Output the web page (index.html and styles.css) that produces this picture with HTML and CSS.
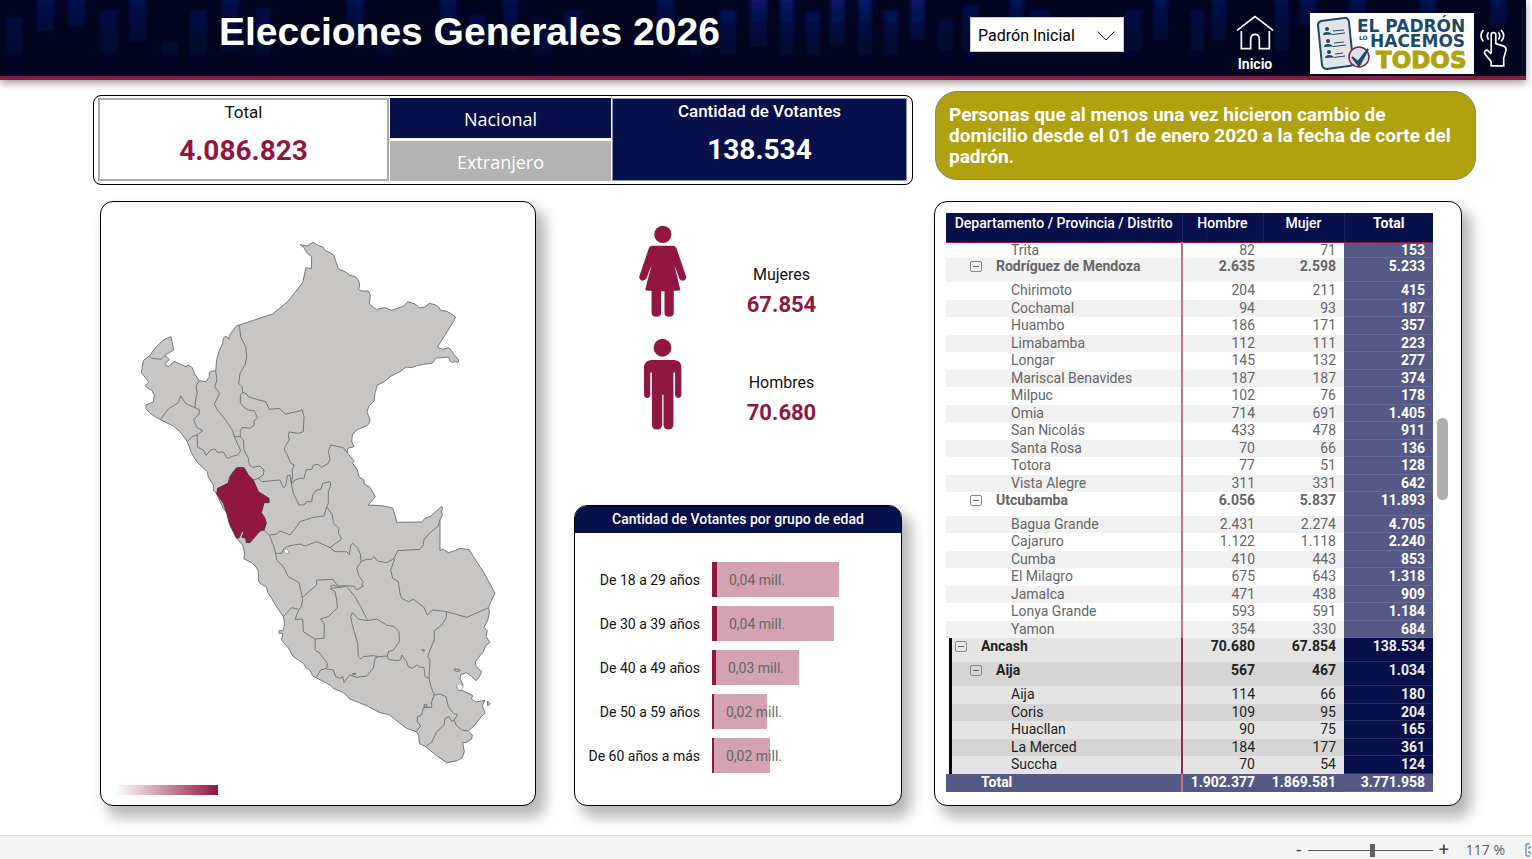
FILE: index.html
```html
<!DOCTYPE html>
<html lang="es">

<head>
    <meta charset="UTF-8">
    <meta name="viewport" content="width=device-width, initial-scale=1.0">
    <title>Elecciones Generales 2026</title>
    <link rel="stylesheet" href="styles.css">
</head>

<body>
    <header class="topbar">
        <svg class="topbar-bg" viewBox="0 0 1526 76" preserveAspectRatio="none" aria-hidden="true">
            <defs>
                <linearGradient id="streak" x1="0" y1="0" x2="0" y2="1">
                    <stop offset="0" stop-color="#0a1d7c" />
                    <stop offset="1" stop-color="#04103f" stop-opacity="0.3" />
                </linearGradient>
                <filter id="soft"><feGaussianBlur stdDeviation="2" /></filter>
            </defs>
            <g fill="url(#streak)" filter="url(#soft)">
                <g opacity="0.6">
                    <path d="M6 18h17v56H6zM37 -5h17v36H37zM68 -5h17v32H68zM100 10h17v60h-17zM129 -5h17v46h-17zM161 43h17v32h-17zM190 10h17v50h-17zM222 -5h17v56h-17zM256 8h15v60h-15z" />
                    <path d="M347 -5h17v45h-17zM376 30h18v42h-18zM440 -5h17v45h-17zM469 15h16v32h-16zM503 -5h15v56h-15zM535 20h17v54h-17zM564 10h17v30h-17zM657 -5h17v45h-17zM689 25h14v46h-14z" />
                    <path d="M938 20h15v52h-15zM963 5h15v60h-15zM1009 -5h15v40h-15zM1030 10h20v30h-20zM1125 10h16v52h-16zM1153 -5h15v45h-15zM1190 10h14v52h-14zM1212 -5h14v45h-14zM1275 -5h14v75h-14zM1300 -5h16v30h-16zM1350 -5h16v20h-16zM1420 -5h16v20h-16zM1490 -5h16v30h-16z" />
                </g>
                <g opacity="0.9">
                    <path d="M720 10h16v46h-16zM750 -5h17v52h-17zM780 -5h14v66h-14zM806 12h14v44h-14zM830 -5h15v50h-15zM858 -5h14v66h-14zM884 10h14v50h-14zM910 -5h15v45h-15z" />
                </g>
            </g>
        </svg>
        <h1>Elecciones Generales 2026</h1>
        <div class="padron-select">
            <select aria-label="Padrón">
                <option>Padrón Inicial</option>
                <option>Padrón Final</option>
            </select>
            <svg width="18" height="10" viewBox="0 0 18 10" aria-hidden="true"><path d="M0.5 0.5l8.5 8.5 8.5-8.5" fill="none" stroke="#222" /></svg>
        </div>
        <a href="#" class="home-link">
            <svg width="38" height="35" viewBox="48 44 114 105" aria-hidden="true">
                <path d="M51 90L105 49L159 90M64 92V145H92V117Q92 102 105 102Q118 102 118 117V145H148V92" fill="none" stroke="#fff" stroke-width="5" />
            </svg>
            <span>Inicio</span>
        </a>
        <svg class="brand" width="164" height="61" viewBox="0 0 164 61" role="img" aria-label="El padrón lo hacemos todos">
            <rect width="164" height="61" fill="#fff" />
            <path d="M11 8L34 5Q38 4 39 9L43 49Q43 53 39 53L17 56Q13 56 12 52L8 12Q8 9 11 8Z" fill="#e3e4e6" stroke="#1b4a6d" stroke-width="2" />
            <g fill="#1b4a6d">
                <circle cx="17" cy="16" r="2" /><path d="M13 22q0-3 4-3t5 2.500z" />
                <circle cx="18" cy="28" r="2" /><path d="M14 34q0-3 4-3t5 2.500z" />
                <circle cx="19" cy="39" r="2" /><path d="M15 45q0-3 4-3t5 2.500z" />
            </g>
            <path d="M23 18l11-1M22 21.500l13-1.500M24 30l10-1M23 33.500l13-1.500M25 41l8-1M24 44.500l11-1.500" stroke="#1b4a6d" fill="none" />
            <circle cx="49" cy="44" r="10" fill="#dfe1e6" stroke="#8b2048" stroke-width="1.500" />
            <path d="M42 44l6 5 10-13-9 17z" fill="#1b4a6d" stroke="#1b4a6d" stroke-width="2" />
            <text x="47" y="19" class="brand-blue brand-line">EL PADRÓN</text>
            <text x="49" y="27" class="brand-blue brand-small">LO</text>
            <text x="60" y="34" class="brand-blue brand-line">HACEMOS</text>
            <text x="66" y="55" class="brand-gold">TODOS</text>
        </svg>
        <svg class="touch" width="27" height="41" viewBox="778 82 82 122" aria-hidden="true">
            <path d="M812 162V104Q812 98 819 98Q826 98 826 104V131L848 138Q858 141 857 151L850 176V199H812V186L792 161Q790 151 800 151L812 162M804 97Q796 107 804 119M788 90Q774 107 788 125M834 97Q842 107 834 119M842 90Q858 107 842 125" fill="none" stroke="#fff" stroke-width="5" />
        </svg>
    </header>

    <main>
        <div class="top-row">
            <section class="summary">
                <div class="summary-total">
                    <span class="summary-label">Total</span>
                    <strong>4.086.823</strong>
                </div>
                <div class="scope">
                    <button type="button" class="active">Nacional</button>
                    <button type="button">Extranjero</button>
                </div>
                <div class="summary-votes">
                    <span class="summary-label">Cantidad de Votantes</span>
                    <strong>138.534</strong>
                </div>
            </section>
            <p class="note">Personas que al menos una vez hicieron cambio de domicilio desde el 01 de enero 2020 a la fecha de corte del padrón.</p>
        </div>

        <div class="panels">
            <section class="card map-card">
                <svg class="map" viewBox="3 -54 1302 1740" role="img" aria-label="Mapa del Perú">
                    <!-- country outline -->
                    <path class="region" d="M600 74L622 78L630 72L639 67L655 77L670 82L673 90L690 98L702 107L708 125L715 147L735 155L750 166L767 170L777 185L779 200L775 208L785 213L805 213L811 225L808 252L820 262L830 268L855 263L875 271L895 264L912 258L923 245L945 252L958 263L975 261L988 250L1005 254L1017 262L1022 271L1040 274L1055 282L1067 292L1060 305L1012 382L1030 388L1046 383L1056 394L1062 404L1076 419L1074 428L1066 424L1058 428L1050 423L1046 411L1025 413L1008 414L998 429L970 433L950 437L935 443L918 441L900 455L875 467L850 487L832 495L825 520L822 543L807 558L801 575L810 600L808 610L800 617L770 630L757 645L755 665L762 680L743 685L743 700L762 722L758 730L772 750L777 770L792 780L793 792L810 802L826 830L804 855L845 857L878 864L885 885L890 907L965 906L975 895L990 890L1025 859L1028 865L1024 875L1028 884L1020 898L1020 992L1028 987L1045 998L1065 992L1080 985L1108 989L1120 1010L1150 1055L1180 1110L1185 1120L1175 1140L1166 1160L1168 1180L1163 1200L1152 1222L1162 1232L1158 1250L1170 1267L1157 1277L1150 1295L1135 1313L1126 1325L1128 1340L1145 1355L1138 1370L1129 1382L1115 1370L1100 1358L1082 1364L1080 1377L1090 1395L1070 1400L1074 1411L1088 1412L1110 1422L1118 1427L1114 1437L1128 1446L1155 1441L1147 1457L1155 1480L1145 1488L1125 1515L1105 1533L1117 1545L1115 1557L1100 1567L1088 1568L1093 1595L1087 1613L1072 1622L1040 1628L1010 1607L977 1580L958 1570L956 1545L948 1535L920 1525L900 1510L868 1484L840 1478L800 1457L750 1437L730 1418L702 1406L690 1395L650 1374L638 1368L630 1350L620 1345L610 1330L578 1308L568 1287L557 1275L545 1260L548 1240L537 1240L537 1232L548 1232L553 1220L553 1205L550 1190L528 1158L515 1135L503 1118L500 1102L480 1090L475 1080L475 1055L468 1040L455 1028L432 1017L434 1000L428 975L410 955L390 915L380 880L365 855L350 822L340 810L340 795L325 772L322 755L290 725L275 700L262 665L240 635L220 618L181 599L150 580L138 566L138 555L150 550L160 545L163 525L155 510L148 508L135 497L146 488L138 475L124 458L130 422L148 408L165 385L190 360L213 350L216 365L221 390L205 400L195 403L198 410L208 418L197 430L197 437L207 439L222 424L240 432L258 440L265 435L277 443L283 460L298 482L318 485L328 470L328 458L335 453L347 453L350 420L357 395L368 370L370 355L378 348L386 358L388 346L410 317L418 315L517 282L563 245L608 188L618 143L634 146L635 110L620 98L611 82Z" />
                    <!-- department borders -->
                    <g class="border">
                        <path d="M148 408L155 415L184 418L197 405M298 482L288 497L292 522L288 530L285 563L298 569L297 583L281 598L290 622L308 632L291 645L293 682L310 690L318 706L332 690L345 687L352 697L370 696L382 715L400 708L413 705L422 692" />
                        <path d="M181 599L205 567L235 548L242 527L255 548L262 553L285 563M262 665L276 650L291 645" />
                        <path d="M347 453L351 480L344 500L359 520L343 552L352 570L375 597L385 612L398 632L403 650L422 692" />
                        <path d="M418 315L422 350L437 380L440 410L435 435L420 460L416 490L426 500L428 517L421 525L421 548L432 562L445 570L462 572L473 593L462 603L463 615L450 625L428 622L421 632L421 650L403 650" />
                        <path d="M428 517L440 522L445 530L470 538L497 545L508 568L537 565L557 582L580 577L600 573L606 568L612 590L610 635L595 640L568 636L565 645L568 660L555 680L553 690L560 700L572 730L583 735L576 750L578 765L574 792" />
                        <path d="M421 650L430 660L432 690L445 715L448 735L458 742L480 738L492 750L490 765L475 775L460 780M475 775L485 785L540 780L550 803L557 798L562 767L570 765L574 792" />
                        <path d="M574 792L585 780L600 775L612 775L618 750L635 748L640 735L655 733L665 742L685 730L690 717L685 695L692 675L730 683L743 700" />
                        <path d="M574 792L580 820L597 855L612 855L620 845L635 845L638 825L650 810L663 808L668 790L690 785L692 795L685 815L685 850L680 860L697 885L700 910L717 925L715 940L725 957L690 983" />
                        <path d="M680 860L672 888L640 892L600 905L590 920L570 945L540 933L530 942L508 945L492 930M508 945L520 975L527 1000L530 1020L550 1040L565 1070L597 1088L603 1115L608 1140L604 1160L595 1172L585 1198L608 1197L610 1235L625 1245L645 1257L672 1255L673 1212L662 1197L685 1190L700 1175L712 1165L710 1140L705 1115L690 1105L720 1102" />
                        <path d="M527 1000L545 1000L552 985L570 977L600 972L615 978L650 965L690 983L705 995L740 995L748 1004L752 975L758 970L772 982L782 1005L783 1025L770 1045L778 1070L790 1087L785 1095L790 1098L770 1110L762 1098L740 1098L720 1102L705 1088L700 1078L650 1080L650 1095L630 1112L608 1132" />
                        <path d="M690 1100L700 1095L708 1098L740 1098M783 1025L800 1018L815 1018L822 1010L832 1023L860 1028L880 1017L890 1000L893 992L960 988L970 975L972 958L990 938L1015 918L1020 898" />
                        <path d="M885 1015L872 1050L878 1075L895 1085L900 1120L905 1135L925 1145L940 1138L972 1162L982 1185L997 1170L1040 1175L1100 1192L1166 1163" />
                        <path d="M1040 1175L1038 1195L1025 1215L1003 1232L1003 1260L990 1290L983 1310L990 1320L987 1375L993 1400L1003 1425L1020 1422L1038 1430L1045 1460L1060 1480L1073 1485L1062 1500" />
                        <path d="M1003 1425L995 1445L995 1462L970 1463L965 1485L952 1490L952 1505L962 1518L948 1535M977 1580L995 1567L1010 1535L1032 1515L1035 1495L1048 1490L1055 1505L1062 1500L1068 1515L1085 1530L1105 1533" />
                        <path d="M550 1190L575 1163L595 1168M646 1257L645 1290L660 1300L682 1330L680 1345L662 1350L648 1374M680 1347L700 1350L707 1370L720 1375L728 1370L732 1388L745 1370L750 1365L770 1372L800 1368L820 1345L825 1315L835 1310" />
                        <path d="M757 1178L752 1190L757 1215L763 1235L773 1270L775 1310L782 1317L790 1310L820 1307L835 1310L862 1308L865 1295L880 1290L898 1265L897 1235L882 1220L860 1215L830 1197L800 1202L775 1197L757 1178M803 1202L782 1160L765 1130L740 1100" />
                        <path d="M862 1308L865 1318L890 1322L902 1320L905 1305L920 1325L925 1340L937 1345L950 1335L960 1342L972 1342L975 1370L987 1375" />
                    </g>
                    <!-- lakes and islands -->
                    <path class="lake" d="M552 988L562 988L567 997L560 1001L553 996ZM1070 1398L1078 1390L1090 1399L1084 1410L1074 1411Z" />
                    <path class="region" d="M1062 1347L1078 1348L1080 1353L1068 1354ZM966 1288L974 1291L972 1294L966 1291ZM972 1454H981V1459H972ZM757 1362L766 1359L766 1364ZM1162 1444L1171 1451L1163 1457Z" />
                    <path class="region selected" d="M410 743L432 743L445 765L460 780L475 815L507 835L507 848L492 848L484 878L495 895L499 910L492 930L480 933L465 950L450 968L438 967L438 955L426 952L432 935L425 935L418 953L410 955L388 910L381 880L370 850L350 822L353 805L384 790L390 770L400 755Z" />
                </svg>
                <div class="map-legend"></div>
            </section>

            <div class="middle">
                <section class="gender">
                    <div class="figures">
                        <svg width="49" height="93" viewBox="200 46 148 280" aria-hidden="true">
                            <circle cx="275" cy="74" r="26" />
                            <path d="M243 108H305Q313 108 316 115L345 200Q347 212 335 214Q328 214 325 208L310 166L327 238Q328 244 320 244H308V310Q308 323 294 323Q280 323 280 310V246H270V310Q270 323 255 323Q241 323 241 310V244H228Q221 243 223 236L241 166L225 208Q220 214 212 214Q202 211 204 200L233 115Q236 108 243 108Z" />
                        </svg>
                        <svg width="49" height="93" viewBox="200 384 148 280" aria-hidden="true">
                            <circle cx="274" cy="413" r="27" />
                            <path d="M240 450H310Q331 452 331 473V556Q330 565 321 565Q313 564 312 556V488H307V646Q305 660 292 660Q278 660 277 646V555H273V646Q271 660 257 660Q243 660 242 646V488H237V556Q236 565 228 565Q219 564 218 556V473Q219 452 240 450Z" />
                        </svg>
                    </div>
                    <div class="counts">
                        <div class="count"><span>Mujeres</span><strong>67.854</strong></div>
                        <div class="count"><span>Hombres</span><strong>70.680</strong></div>
                    </div>
                </section>

                <section class="card age-card">
                    <h2>Cantidad de Votantes por grupo de edad</h2>
                    <div class="bars">
                        <div class="bar-row"><span class="bar-label">De 18 a 29 años</span><div class="track"><div class="bar large" style="width: 72%">0,04 mill.</div></div></div>
                        <div class="bar-row"><span class="bar-label">De 30 a 39 años</span><div class="track"><div class="bar large" style="width: 69%">0,04 mill.</div></div></div>
                        <div class="bar-row"><span class="bar-label">De 40 a 49 años</span><div class="track"><div class="bar medium" style="width: 49%">0,03 mill.</div></div></div>
                        <div class="bar-row"><span class="bar-label">De 50 a 59 años</span><div class="track"><div class="bar" style="width: 31%">0,02 mill.</div></div></div>
                        <div class="bar-row"><span class="bar-label">De 60 años a más</span><div class="track"><div class="bar" style="width: 33%">0,02 mill.</div></div></div>
                    </div>
                </section>
            </div>

            <section class="card table-card">
                <table class="votes">
                    <colgroup>
                        <col class="col-name">
                        <col class="col-num">
                        <col class="col-num">
                        <col class="col-total">
                    </colgroup>
                    <thead>
                        <tr>
                            <th>Departamento / Provincia / Distrito</th>
                            <th>Hombre</th>
                            <th>Mujer</th>
                            <th>Total</th>
                        </tr>
                    </thead>
                    <tbody>
                        <tr class="clipped"><td>Trita</td><td>82</td><td>71</td><td>153</td></tr>
                        <tr class="province"><td><button type="button" class="toggle" aria-label="Contraer"></button>Rodríguez de Mendoza</td><td>2.635</td><td>2.598</td><td>5.233</td></tr>
                        <tr><td>Chirimoto</td><td>204</td><td>211</td><td>415</td></tr>
                        <tr><td>Cochamal</td><td>94</td><td>93</td><td>187</td></tr>
                        <tr><td>Huambo</td><td>186</td><td>171</td><td>357</td></tr>
                        <tr><td>Limabamba</td><td>112</td><td>111</td><td>223</td></tr>
                        <tr><td>Longar</td><td>145</td><td>132</td><td>277</td></tr>
                        <tr><td>Mariscal Benavides</td><td>187</td><td>187</td><td>374</td></tr>
                        <tr><td>Milpuc</td><td>102</td><td>76</td><td>178</td></tr>
                        <tr><td>Omia</td><td>714</td><td>691</td><td>1.405</td></tr>
                        <tr><td>San Nicolás</td><td>433</td><td>478</td><td>911</td></tr>
                        <tr><td>Santa Rosa</td><td>70</td><td>66</td><td>136</td></tr>
                        <tr><td>Totora</td><td>77</td><td>51</td><td>128</td></tr>
                        <tr><td>Vista Alegre</td><td>311</td><td>331</td><td>642</td></tr>
                        <tr class="province"><td><button type="button" class="toggle" aria-label="Contraer"></button>Utcubamba</td><td>6.056</td><td>5.837</td><td>11.893</td></tr>
                        <tr><td>Bagua Grande</td><td>2.431</td><td>2.274</td><td>4.705</td></tr>
                        <tr><td>Cajaruro</td><td>1.122</td><td>1.118</td><td>2.240</td></tr>
                        <tr><td>Cumba</td><td>410</td><td>443</td><td>853</td></tr>
                        <tr><td>El Milagro</td><td>675</td><td>643</td><td>1.318</td></tr>
                        <tr><td>Jamalca</td><td>471</td><td>438</td><td>909</td></tr>
                        <tr><td>Lonya Grande</td><td>593</td><td>591</td><td>1.184</td></tr>
                        <tr><td>Yamon</td><td>354</td><td>330</td><td>684</td></tr>
                        <tr class="department selected"><td><button type="button" class="toggle" aria-label="Contraer"></button>Ancash</td><td>70.680</td><td>67.854</td><td>138.534</td></tr>
                        <tr class="province selected"><td><button type="button" class="toggle" aria-label="Contraer"></button>Aija</td><td>567</td><td>467</td><td>1.034</td></tr>
                        <tr class="selected"><td>Aija</td><td>114</td><td>66</td><td>180</td></tr>
                        <tr class="selected"><td>Coris</td><td>109</td><td>95</td><td>204</td></tr>
                        <tr class="selected"><td>Huacllan</td><td>90</td><td>75</td><td>165</td></tr>
                        <tr class="selected"><td>La Merced</td><td>184</td><td>177</td><td>361</td></tr>
                        <tr class="selected"><td>Succha</td><td>70</td><td>54</td><td>124</td></tr>
                    </tbody>
                    <tfoot>
                        <tr><td>Total</td><td>1.902.377</td><td>1.869.581</td><td>3.771.958</td></tr>
                    </tfoot>
                </table>
                <div class="scrollbar"><div class="thumb"></div></div>
            </section>
        </div>
    </main>

    <footer class="zoombar">
        <button type="button" aria-label="Alejar">-</button>
        <input type="range" min="0" max="100" value="52" aria-label="Zoom">
        <button type="button" aria-label="Acercar">+</button>
        <span class="zoom-value">117 %</span>
        <svg class="fit" width="14" height="14" viewBox="0 0 14 14" aria-hidden="true"><path d="M5 1H1V13H5M9 1H13V13H9M6 4H4V6M4 8V10H6" fill="none" stroke="#3b6a98" /></svg>
    </footer>
</body>

</html>
```
FILE: styles.css
```css
* {
    box-sizing: border-box;
}

body {
    font-family: Roboto, "Liberation Sans", sans-serif;
    margin: 0;
    min-height: 100vh;
    display: flex;
    flex-direction: column;
    background-color: #fff;
    color: #111;
    overflow-x: hidden;
}

button {
    font-family: inherit;
    padding: 0;
    border: none;
    background: none;
    cursor: pointer;
}

/* Top bar */
.topbar {
    position: relative;
    display: flex;
    align-items: flex-start;
    height: 80px;
    margin-right: 6px;
    padding-left: 219px;
    padding-right: 19px;
    background-color: #01041f;
    border-bottom: 4px solid #861d45;
    box-shadow: 0 3px 8px rgba(0, 0, 0, 0.4);
}

.topbar-bg {
    position: absolute;
    top: 0;
    left: 0;
    width: 100%;
    height: 76px;
}

.topbar h1,
.padron-select,
.home-link,
.brand,
.touch {
    position: relative;
}

.topbar h1 {
    margin: 9px auto 0 0;
    font-family: "Liberation Sans", Arial, sans-serif;
    font-size: 39px;
    line-height: 46px;
    color: #fff;
}

.padron-select {
    width: 154px;
    margin-top: 17px;
    margin-right: 111px;
}

.padron-select select {
    appearance: none;
    width: 100%;
    height: 35px;
    padding: 2px 7px 0;
    border: 1px solid #ccc;
    border-radius: 0;
    background-color: #fff;
    font-family: inherit;
    font-size: 16px;
    color: #000;
}

.padron-select svg {
    position: absolute;
    top: 14px;
    right: 9px;
    pointer-events: none;
}

.home-link {
    display: flex;
    flex-direction: column;
    align-items: center;
    width: 40px;
    margin-top: 15px;
    margin-right: 35px;
    color: #fff;
    font-size: 14px;
    font-weight: bold;
    line-height: 28px;
    text-decoration: none;
}

.brand {
    margin-top: 13px;
    margin-right: 6px;
    font-family: "DejaVu Sans", sans-serif;
    font-weight: bold;
}

.brand-blue {
    fill: #1b4a6d;
}

.brand-line {
    font-size: 17px;
}

.brand-small {
    font-size: 6px;
}

.brand-gold {
    font-size: 23px;
    fill: #b0a10f;
    stroke: #b0a10f;
}

.touch {
    margin-top: 27px;
}

/* Content */
main {
    flex: 1;
    display: flex;
    flex-direction: column;
    gap: 16px;
    padding: 11px 56px 29px 93px;
}

.top-row {
    display: grid;
    grid-template-columns: 820fr 541fr;
    gap: 22px;
}

.summary {
    display: grid;
    grid-template-columns: 291fr 221fr 295fr;
    gap: 1px;
    height: 90px;
    margin-top: 4px;
    padding: 2px 5px 3px 4px;
    border: 1px solid #000;
    border-radius: 8px;
}

.summary-total,
.summary-votes {
    display: flex;
    flex-direction: column;
    align-items: center;
    border: 2px solid #aaa;
    line-height: 24px;
}

.summary-votes {
    border: 1px solid #8a8fb0;
    background-color: #08104c;
    color: #fff;
    font-weight: 500;
}

.summary-label {
    font-size: 17px;
}

.summary strong {
    font-size: 28px;
    line-height: 54px;
}

.summary-total strong {
    color: #921740;
}

.scope {
    display: grid;
    gap: 3px;
}

.scope button {
    padding-top: 2px;
    background-color: #b3b3b3;
    color: #fff;
    font-family: "Open Sans", "Noto Sans", sans-serif;
    font-size: 18px;
}

.scope .active {
    background-color: #08104c;
}

.note {
    height: 89px;
    margin: 0;
    padding: 12px 13px;
    border: 1px solid #85857a;
    border-radius: 22px;
    background-color: #b0a10f;
    color: #fff;
    font-size: 19px;
    font-weight: bold;
    line-height: 21px;
}

.panels {
    flex: 1;
    display: grid;
    grid-template-columns: 436fr 334fr 528fr;
    column-gap: 32px;
    padding: 0 14px 0 7px;
}

.card {
    border: 1px solid #000;
    border-radius: 13px;
    background-color: #fff;
    box-shadow: 8px 10px 14px 2px rgba(0, 0, 0, 0.28);
}

/* Map */
.map-card {
    display: flex;
    flex-direction: column;
}

.map {
    display: block;
    width: 100%;
    flex: 1;
}

.region {
    fill: #c8c6c4;
    stroke: #777;
    stroke-width: 3;
    stroke-linejoin: round;
}

.region.selected {
    fill: #921740;
    stroke: #5a3040;
}

.border {
    fill: none;
    stroke: #777;
    stroke-width: 3;
    stroke-linejoin: round;
}

.lake {
    fill: #fff;
    stroke: #888;
    stroke-width: 2;
}

.map-legend {
    width: 103px;
    height: 10px;
    margin: 3px 0 10px 14px;
    background-image: linear-gradient(to right, #fff, #921740);
}

/* Gender + age */
.middle {
    display: flex;
    flex-direction: column;
    margin-left: 6px;
}

.gender {
    flex: 1;
    display: flex;
    padding: 24px 26px 0 64px;
}

.figures {
    display: flex;
    flex-direction: column;
    gap: 20px;
    fill: #921740;
}

.counts {
    flex: 1;
    display: flex;
    flex-direction: column;
    gap: 48px;
    padding-top: 38px;
}

.count {
    display: flex;
    flex-direction: column;
    align-items: center;
    font-size: 16px;
    line-height: 24px;
}

.count strong {
    color: #921740;
    font-size: 22px;
    line-height: 36px;
}

.age-card {
    height: 301px;
    overflow: hidden;
}

.age-card h2 {
    margin: 0;
    height: 27px;
    background-color: #08104c;
    color: #fff;
    font-size: 14px;
    font-weight: 500;
    line-height: 26px;
    text-align: center;
}

.bars {
    display: flex;
    flex-direction: column;
    gap: 9px;
    padding: 29px 12px 0;
}

.bar-row {
    display: flex;
    align-items: center;
    gap: 12px;
    font-size: 14px;
}

.bar-label {
    width: 113px;
    text-align: right;
    white-space: nowrap;
}

.track {
    flex: 1;
}

.bar {
    height: 35px;
    padding-left: 12px;
    border-left: 2px solid #921740;
    background-color: #d3a2b3;
    color: #666;
    line-height: 36px;
    white-space: nowrap;
}

.bar.medium {
    border-left-width: 4px;
}

.bar.large {
    border-left-width: 5px;
}

/* Table */
.table-card {
    display: flex;
    align-items: flex-start;
    gap: 4px;
    padding: 11px 13px 0 11px;
}

.votes {
    flex: 1;
    table-layout: fixed;
    border-collapse: collapse;
    color: #666;
    font-size: 14px;
    line-height: 17px;
}

.col-num {
    width: 81px;
}

.col-total {
    width: 89px;
}

.votes th {
    height: 29px;
    padding: 2px 0 0;
    border-right: 1px solid #1d2560;
    border-bottom: 1px solid #921740;
    background-color: #08104c;
    color: #fff;
    font-weight: 500;
    vertical-align: top;
    white-space: nowrap;
}

.votes th:last-child {
    border-right: none;
    font-weight: bold;
}

.votes td {
    height: 18px;
    padding: 0 8px 0 0;
    text-align: right;
    vertical-align: top;
}

.votes tr:nth-child(even) td {
    height: 17px;
    background-color: #f1f1f1;
}

.votes td:first-child {
    padding-left: 65px;
    border-right: 2px solid #c2718d;
    text-align: left;
}

.votes td:last-child,
.votes tr:nth-child(even) td:last-child {
    background-color: #545985;
    box-shadow: inset 0 -1px #666b95;
    color: #fff;
    font-weight: bold;
}

.votes .clipped td {
    height: 15px;
    line-height: 15px;
}

.votes .province td,
.votes .department td,
.votes tr.province:nth-child(even) td {
    height: 24px;
    font-weight: bold;
}

.votes .province td:first-child {
    padding-left: 24px;
}

.votes .department td:first-child {
    padding-left: 9px;
}

.votes .selected td {
    background-color: #e4e4e4;
    color: #222;
}

.votes .selected:nth-child(even) td {
    background-color: #d5d5d5;
}

.votes .selected td:first-child {
    border-right-color: #86304f;
    box-shadow: inset 3px 0 #fff, inset 6px 0 #000;
}

.votes .selected td:last-child,
.votes .selected:nth-child(even) td:last-child {
    background-color: #08104c;
    box-shadow: inset 0 -1px #262d62;
    color: #eee;
}

.votes tfoot td {
    background-color: #545985;
    color: #fff;
    font-weight: bold;
}

.votes tfoot td:first-child {
    padding-left: 35px;
}

.toggle {
    display: inline-flex;
    align-items: center;
    justify-content: center;
    width: 12px;
    height: 11px;
    margin-top: 3px;
    margin-right: 14px;
    border: 1px solid #888;
    border-radius: 2px;
    vertical-align: top;
}

.toggle::before {
    content: "";
    width: 6px;
    height: 1px;
    background-color: #666;
}

.scrollbar {
    width: 11px;
    height: 579px;
    padding-top: 205px;
}

.thumb {
    height: 82px;
    border-radius: 6px;
    background-color: #b0aeac;
}

/* Zoom bar */
.zoombar {
    display: flex;
    align-items: center;
    justify-content: flex-end;
    height: 24px;
    padding-top: 5px;
    border-top: 1px solid #ddd;
    background-color: #f4f4f4;
    color: #605e5c;
    overflow: hidden;
}

.zoombar button {
    width: 12px;
    color: #444;
    font-size: 18px;
    line-height: 18px;
}

.zoombar input {
    appearance: none;
    width: 125px;
    height: 13px;
    margin: 0 5px 0 3px;
    background: linear-gradient(#605e5c, #605e5c) center / 100% 1px no-repeat;
}

.zoombar input::-webkit-slider-thumb {
    appearance: none;
    width: 5px;
    height: 13px;
    background-color: #605e5c;
}

.zoom-value {
    margin-left: 16px;
    font-family: "Open Sans", "Noto Sans", sans-serif;
    font-size: 14px;
    line-height: 18px;
}

.fit {
    flex: none;
    margin-left: 20px;
    margin-right: -7px;
}
```
